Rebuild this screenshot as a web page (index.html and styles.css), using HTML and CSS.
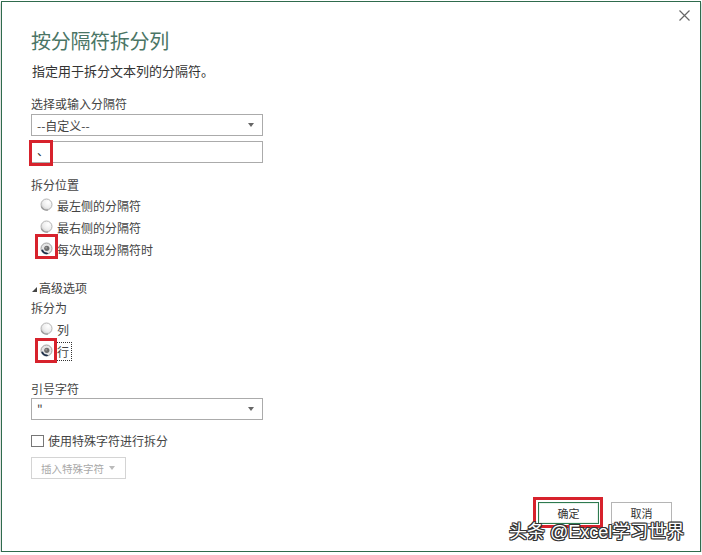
FILE: index.html
```html
<!DOCTYPE html>
<html lang="zh">
<head>
<meta charset="utf-8">
<title>按分隔符拆分列</title>
<link rel="stylesheet" href="styles.css">
</head>
<body>
<div class="window">
  <div class="topbar">
    <svg class="close" width="11" height="11" viewBox="0 0 11 11"><path d="M0.5 0.5 L10.5 10.5 M10.5 0.5 L0.5 10.5" stroke="#666" stroke-width="1.2" fill="none"/></svg>
  </div>
  <div class="content">
    <h1 class="title">按分隔符拆分列</h1>
    <p class="subtitle">指定用于拆分文本列的分隔符。</p>
    <div class="label l-first">选择或输入分隔符</div>
    <div class="select s-first"><span>--自定义--</span><i class="caret"></i></div>
    <div class="input"><span class="input-text">、</span><span class="mark mark-input"></span></div>
    <div class="label l-pos">拆分位置</div>
    <div class="radios r-pos">
      <div class="radio-row">
        <svg class="radio" width="14" height="14" viewBox="0 0 14 14"><defs><radialGradient id="g1" cx="0.65" cy="0.3" r="0.8"><stop offset="0" stop-color="#ffffff"/><stop offset="0.6" stop-color="#ececec"/><stop offset="1" stop-color="#c4c4c4"/></radialGradient></defs><circle cx="7.5" cy="6.5" r="5.5" fill="url(#g1)" stroke="#b5b5b5" stroke-width="1"/><path d="M2.3 8.5 A5.5 5.5 0 0 0 9 12" stroke="#9a9a9a" stroke-width="1.2" fill="none"/></svg>
        <span>最左侧的分隔符</span>
      </div>
      <div class="radio-row">
        <svg class="radio" width="14" height="14" viewBox="0 0 14 14"><circle cx="7.5" cy="6.5" r="5.5" fill="url(#g1)" stroke="#b5b5b5" stroke-width="1"/><path d="M2.3 8.5 A5.5 5.5 0 0 0 9 12" stroke="#9a9a9a" stroke-width="1.2" fill="none"/></svg>
        <span>最右侧的分隔符</span>
      </div>
      <div class="radio-row">
        <svg class="radio" width="14" height="14" viewBox="0 0 14 14"><circle cx="7.5" cy="6.5" r="5.5" fill="#e6e6e6" stroke="#a0a0a0" stroke-width="1"/><path d="M2.2 8 A5.5 5.5 0 0 0 9.5 11.8 L8 10.5 A4 4 0 0 1 4 7.5 Z" fill="#1d2f4a"/><circle cx="7.8" cy="6.3" r="2.6" fill="#6d6d6d"/><circle cx="7.2" cy="5.7" r="1" fill="#9a9a9a"/></svg>
        <span>每次出现分隔符时</span>
        <span class="mark mark-radio"></span>
      </div>
    </div>
    <div class="advanced"><i class="tri"></i>高级选项</div>
    <div class="label l-split">拆分为</div>
    <div class="radios r-split">
      <div class="radio-row">
        <svg class="radio" width="14" height="14" viewBox="0 0 14 14"><circle cx="7.5" cy="6.5" r="5.5" fill="url(#g1)" stroke="#b5b5b5" stroke-width="1"/><path d="M2.3 8.5 A5.5 5.5 0 0 0 9 12" stroke="#9a9a9a" stroke-width="1.2" fill="none"/></svg>
        <span>列</span>
      </div>
      <div class="radio-row">
        <svg class="radio" width="14" height="14" viewBox="0 0 14 14"><circle cx="7.5" cy="6.5" r="5.5" fill="#e6e6e6" stroke="#a0a0a0" stroke-width="1"/><path d="M2.2 8 A5.5 5.5 0 0 0 9.5 11.8 L8 10.5 A4 4 0 0 1 4 7.5 Z" fill="#1d2f4a"/><circle cx="7.8" cy="6.3" r="2.6" fill="#6d6d6d"/><circle cx="7.2" cy="5.7" r="1" fill="#9a9a9a"/></svg>
        <span class="focus">行</span>
        <span class="mark mark-radio2"></span>
      </div>
    </div>
    <div class="label l-quote">引号字符</div>
    <div class="select s-quote"><span>"</span><i class="caret"></i></div>
    <div class="check-row"><span class="checkbox"></span><span>使用特殊字符进行拆分</span></div>
    <div class="btn-disabled"><span>插入特殊字符</span><i class="caret light"></i></div>
  </div>
  <div class="footer">
    <div class="btn-wrap"><button class="btn primary">确定</button><span class="mark mark-btn"></span></div>
    <button class="btn">取消</button>
  </div>
  <div class="watermark">头条 @Excel学习世界</div>
</div>
</body>
</html>
```
FILE: styles.css
```css
* { box-sizing: border-box; }
html, body {
  margin: 0;
  padding: 0;
  background: #ffffff;
}
body {
  font-family: "Noto Sans CJK SC", "Noto Sans", sans-serif;
  color: #444;
  font-size: 12px;
}
.window {
  position: relative;
  margin: 1px 0 0 1px;
  width: 700px;
  height: 551px;
  border: 1px solid #2f6b4d;
  background: #fff;
  box-shadow: 0 2px 2px rgba(0, 0, 0, 0.35);
  display: flex;
  flex-direction: column;
}
.topbar {
  display: flex;
  justify-content: flex-end;
  padding: 8px 10px 0 0;
  height: 19px;
}
.close { display: block; }
.content {
  padding-left: 29px;
  flex: 1;
}
.title {
  margin: 8px 0 0;
  font-size: 20px;
  line-height: 24px;
  font-weight: 400;
  color: #4a7565;
  letter-spacing: -0.3px;
}
.subtitle {
  margin: 9px 0 0;
  font-size: 13px;
  line-height: 18px;
  color: #333;
  padding-left: 1px;
}
.label {
  font-size: 12px;
  line-height: 16px;
  color: #444;
}
.l-first { margin-top: 16px; }
.l-pos { margin-top: 14px; }
.l-split { margin-top: 4px; }
.l-quote { margin-top: 19px; }
.select {
  width: 232px;
  height: 22px;
  border: 1px solid #ababab;
  display: flex;
  align-items: center;
  justify-content: space-between;
  padding: 0 8px 0 5px;
  font-size: 12px;
  color: #444;
}
.s-first { margin-top: 2px; }
.s-quote { margin-top: 1px; }
.caret {
  display: block;
  width: 0;
  height: 0;
  border-left: 3px solid transparent;
  border-right: 3px solid transparent;
  border-top: 4px solid #666;
}
.caret.light { border-top-color: #bbb; }
.input {
  position: relative;
  margin-top: 5px;
  width: 232px;
  height: 22px;
  border: 1px solid #ababab;
  padding-left: 5px;
  line-height: 20px;
  font-size: 12px;
  color: #333;
}
.input-text { position: relative; top: -1px; }
.mark {
  position: absolute;
  border: 3px solid #d7222c;
  pointer-events: none;
}
.mark-input {
  left: -3px;
  top: -2px;
  width: 24px;
  height: 26px;
}
.radios { display: flex; flex-direction: column; }
.r-pos { margin-top: 1px; }
.r-split { margin-top: 2px; }
.radio-row {
  position: relative;
  height: 22px;
  display: flex;
  align-items: center;
  padding-left: 8px;
  gap: 4px;
  font-size: 12px;
  color: #444;
}
.radio { display: block; flex: none; }
.mark-radio {
  left: 4px;
  top: -4px;
  width: 23px;
  height: 25px;
}
.mark-radio2 {
  left: 4px;
  top: -2px;
  width: 22px;
  height: 25px;
}
.focus {
  outline: 1px dotted #333;
  outline-offset: 1px;
  line-height: 15px;
  padding: 0 1px;
  margin-left: -1px;
}
.advanced {
  margin-top: 20px;
  display: flex;
  align-items: center;
  gap: 2px;
  font-size: 12px;
  line-height: 16px;
  padding-left: 1px;
}
.tri {
  display: block;
  width: 0;
  height: 0;
  border-left: 5px solid transparent;
  border-bottom: 5px solid #444;
  margin-top: 2px;
}
.check-row {
  margin-top: 13px;
  display: flex;
  align-items: center;
  gap: 4px;
  line-height: 16px;
  font-size: 12px;
}
.checkbox {
  display: block;
  width: 13px;
  height: 12px;
  border: 1px solid #777;
  background: #fff;
}
.btn-disabled {
  margin-top: 8px;
  width: 95px;
  height: 22px;
  border: 1px solid #d4d4d4;
  display: flex;
  align-items: center;
  justify-content: space-between;
  padding: 0 10px 0 9px;
  font-size: 10.5px;
  color: #a8a8a8;
}
.footer {
  display: flex;
  justify-content: flex-end;
  gap: 12px;
  padding: 0 28px 27px 0;
}
.btn-wrap { position: relative; }
.btn {
  display: block;
  width: 61px;
  height: 22px;
  border: 1px solid #b5b5b5;
  background: #fff;
  font-family: "Noto Sans CJK SC", sans-serif;
  font-size: 11px;
  color: #333;
  padding: 0;
}
.btn.primary { border: 1px solid #2e7a50; box-shadow: inset 0 0 0 1px #e9f3ec; }
.mark-btn {
  left: -5px;
  top: -5px;
  right: -4px;
  bottom: -4px;
}
.watermark {
  position: absolute;
  left: 507px;
  top: 519px;
  font-family: "Liberation Sans", "Noto Sans CJK SC", sans-serif;
  font-size: 18px;
  line-height: 22px;
  color: #fff;
  white-space: nowrap;
  text-shadow: 1px 0 0 #333, -1px 0 0 #333, 0 1px 0 #333, 0 -1px 0 #333, 1px 1px 0 #333, -1px -1px 0 #333, 1px -1px 0 #333, -1px 1px 0 #333;
}
```
